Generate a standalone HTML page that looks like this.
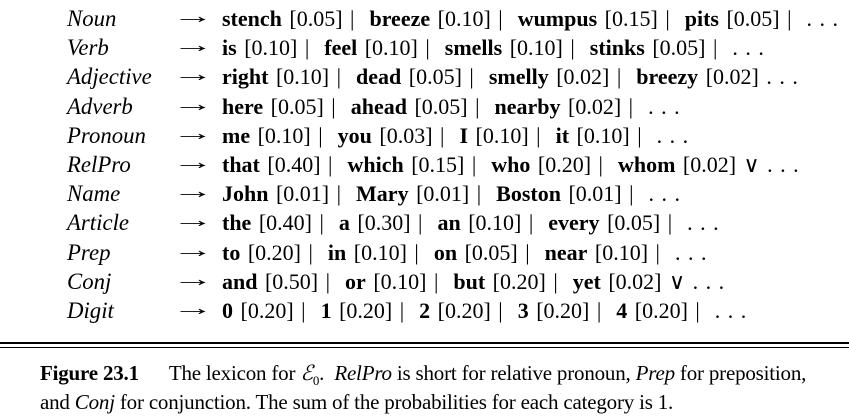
<!DOCTYPE html>
<html><head><meta charset="utf-8"><style>
body{margin:0;width:849px;height:413px;background:#fff;font-family:"Liberation Serif","DejaVu Serif",serif;color:#000;position:relative;overflow:hidden}
.rows{position:absolute;left:0;top:4px;font-size:22px;line-height:29.2px}
.r{position:relative;height:29.2px;white-space:nowrap}
.l{position:absolute;left:67px;top:0px;font-style:italic;font-size:22.8px}
.a{position:absolute;left:172px;top:-3px;display:inline-block;transform:scaleX(1.9);transform-origin:left}
.v{position:absolute;left:222px;word-spacing:2px}
b{font-weight:bold}
.hr1{position:absolute;left:0;right:0;top:342px;height:2px;background:#000}
.hr2{position:absolute;left:0;right:0;top:347px;height:1px;background:#000}
.cap{position:absolute;left:40px;top:359px;font-size:21px;line-height:29px;white-space:nowrap;letter-spacing:-0.2px}
.cap i{font-style:italic}
.cap sub{font-size:13px;line-height:0}
</style></head><body>
<div class="rows">
<div class="r"><span class="l">Noun</span><span class="a">→</span><span class="v"><b>stench</b> [0.05] | &nbsp;<b>breeze</b> [0.10] | &nbsp;<b>wumpus</b> [0.15] | &nbsp;<b>pits</b> [0.05] | &nbsp;. . .</span></div>
<div class="r"><span class="l">Verb</span><span class="a">→</span><span class="v"><b>is</b> [0.10] | &nbsp;<b>feel</b> [0.10] | &nbsp;<b>smells</b> [0.10] | &nbsp;<b>stinks</b> [0.05] | &nbsp;. . .</span></div>
<div class="r"><span class="l">Adjective</span><span class="a">→</span><span class="v"><b>right</b> [0.10] | &nbsp;<b>dead</b> [0.05] | &nbsp;<b>smelly</b> [0.02] | &nbsp;<b>breezy</b> [0.02] . . .</span></div>
<div class="r"><span class="l">Adverb</span><span class="a">→</span><span class="v"><b>here</b> [0.05] | &nbsp;<b>ahead</b> [0.05] | &nbsp;<b>nearby</b> [0.02] | &nbsp;. . .</span></div>
<div class="r"><span class="l">Pronoun</span><span class="a">→</span><span class="v"><b>me</b> [0.10] | &nbsp;<b>you</b> [0.03] | &nbsp;<b>I</b> [0.10] | &nbsp;<b>it</b> [0.10] | &nbsp;. . .</span></div>
<div class="r"><span class="l">RelPro</span><span class="a">→</span><span class="v"><b>that</b> [0.40] | &nbsp;<b>which</b> [0.15] | &nbsp;<b>who</b> [0.20] | &nbsp;<b>whom</b> [0.02] ∨ . . .</span></div>
<div class="r"><span class="l">Name</span><span class="a">→</span><span class="v"><b>John</b> [0.01] | &nbsp;<b>Mary</b> [0.01] | &nbsp;<b>Boston</b> [0.01] | &nbsp;. . .</span></div>
<div class="r"><span class="l">Article</span><span class="a">→</span><span class="v"><b>the</b> [0.40] | &nbsp;<b>a</b> [0.30] | &nbsp;<b>an</b> [0.10] | &nbsp;<b>every</b> [0.05] | &nbsp;. . .</span></div>
<div class="r"><span class="l">Prep</span><span class="a">→</span><span class="v"><b>to</b> [0.20] | &nbsp;<b>in</b> [0.10] | &nbsp;<b>on</b> [0.05] | &nbsp;<b>near</b> [0.10] | &nbsp;. . .</span></div>
<div class="r"><span class="l">Conj</span><span class="a">→</span><span class="v"><b>and</b> [0.50] | &nbsp;<b>or</b> [0.10] | &nbsp;<b>but</b> [0.20] | &nbsp;<b>yet</b> [0.02] ∨ . . .</span></div>
<div class="r"><span class="l">Digit</span><span class="a">→</span><span class="v"><b>0</b> [0.20] | &nbsp;<b>1</b> [0.20] | &nbsp;<b>2</b> [0.20] | &nbsp;<b>3</b> [0.20] | &nbsp;<b>4</b> [0.20] | &nbsp;. . .</span></div>
</div>
<div class="hr1"></div><div class="hr2"></div>
<div class="cap"><b>Figure 23.1</b>&nbsp;&nbsp;&nbsp;&nbsp;&nbsp; The lexicon for <i>ℰ</i><sub>0</sub>. &nbsp;<i>RelPro</i> is short for relative pronoun, <i>Prep</i> for preposition,<br>and <i>Conj</i> for conjunction. The sum of the probabilities for each category is 1.</div>
</body></html>
